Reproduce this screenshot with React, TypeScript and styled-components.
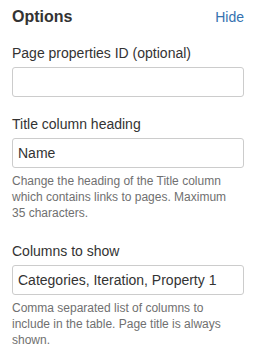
import React from "react";
import styled, { createGlobalStyle } from "styled-components";

const GlobalStyle = createGlobalStyle`
  html, body {
    margin: 0;
    padding: 0;
    background: #ffffff;
  }
  body {
    font-family: "Liberation Sans", Arial, sans-serif;
    color: #333333;
  }
  * { box-sizing: border-box; }
`;

const Panel = styled.div`
  width: 260px;
  padding: 7px 16px 0 12px;
  font-family: "Liberation Sans", Arial, sans-serif;
`;

const Header = styled.div`
  display: flex;
  justify-content: space-between;
  align-items: baseline;
  height: 20px;
`;

const Title = styled.h3`
  margin: 0;
  font-size: 16px;
  line-height: 20px;
  font-weight: bold;
  color: #333333;
`;

const HideLink = styled.a`
  font-size: 14px;
  line-height: 20px;
  color: #3572b0;
  text-decoration: none;
  cursor: pointer;
`;

const Form = styled.form`
  margin: 16px 0 0;
  display: flex;
  flex-direction: column;
`;

const FieldGroup = styled.div<{ $hasHelp?: boolean }>`
  display: flex;
  flex-direction: column;
  margin-bottom: ${(p) => (p.$hasHelp ? "20px" : "17px")};
`;

const Label = styled.label`
  display: block;
  font-size: 14px;
  line-height: 20px;
  color: #333333;
  margin-bottom: 4px;
`;

const TextInput = styled.input`
  display: block;
  width: 100%;
  height: 30px;
  margin: 0;
  padding: 0 5px;
  border: 1px solid #cccccc;
  border-radius: 3px;
  background: #ffffff;
  font-family: "Liberation Sans", Arial, sans-serif;
  font-size: 14px;
  color: #333333;
  outline: none;
`;

const Description = styled.div`
  margin-top: 5px;
  padding-right: 7px;
  font-size: 12px;
  line-height: 16px;
  color: #707070;
`;

type Field = {
  id: string;
  label: string;
  value: string;
  help?: string;
};

const fields: Field[] = [
  { id: "pageid", label: "Page properties ID (optional)", value: "" },
  {
    id: "title",
    label: "Title column heading",
    value: "Name",
    help: "Change the heading of the Title column which contains links to pages. Maximum 35 characters.",
  },
  {
    id: "columns",
    label: "Columns to show",
    value: "Categories, Iteration, Property 1",
    help: "Comma separated list of columns to include in the table. Page title is always shown.",
  },
];

export default function App() {
  return (
    <>
      <GlobalStyle />
      <Panel>
        <Header>
          <Title>Options</Title>
          <HideLink>Hide</HideLink>
        </Header>
        <Form onSubmit={(e) => e.preventDefault()}>
          {fields.map((f) => (
            <FieldGroup key={f.id} $hasHelp={!!f.help}>
              <Label htmlFor={f.id}>{f.label}</Label>
              <TextInput id={f.id} type="text" defaultValue={f.value} />
              {f.help && <Description>{f.help}</Description>}
            </FieldGroup>
          ))}
        </Form>
      </Panel>
    </>
  );
}
